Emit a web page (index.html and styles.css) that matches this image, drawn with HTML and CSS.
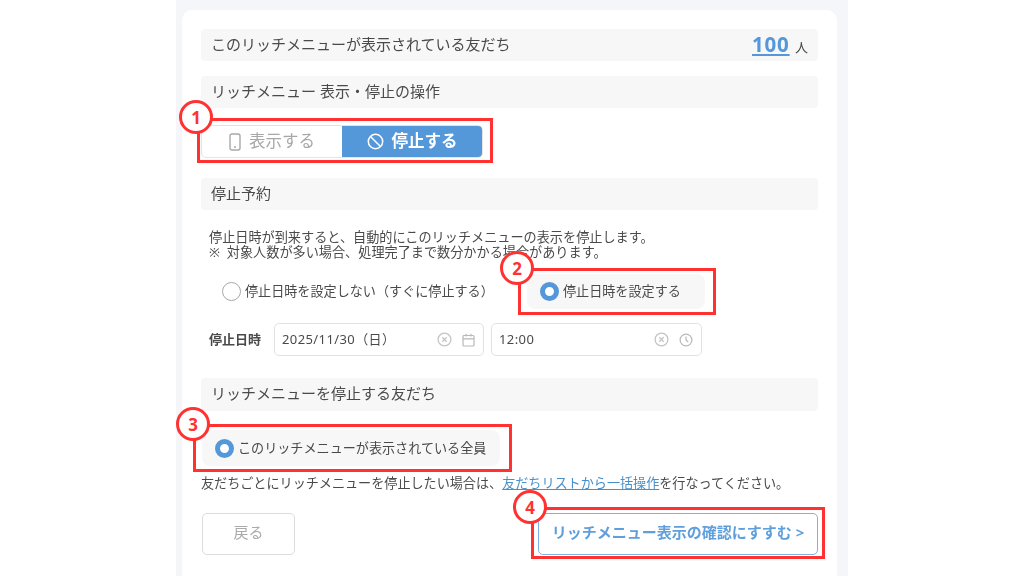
FILE: index.html
```html
<!DOCTYPE html>
<html lang="ja">
<head>
  <meta charset="UTF-8" />
  <title>リッチメニュー 表示・停止の操作</title>
  <link rel="stylesheet" href="styles.css">
</head>
<body>
  <div class="panel">
    <div class="card">
      <div class="bar bar-count">
        <span>このリッチメニューが表示されている友だち</span>
        <span class="count"><a href="#">100</a> 人</span>
      </div>
      <div class="bar bar-ops">リッチメニュー 表示・停止の操作</div>

      <div class="toggle">
        <div class="toggle-item">
          <svg width="12" height="18" viewBox="0 0 12 18" fill="none" stroke="#a8a8a8" stroke-width="1.4"><rect x="1" y="1" width="10" height="16" rx="2"/><path d="M5 14h2"/></svg>
          <span>表示する</span>
        </div>
        <div class="toggle-item toggle-on">
          <svg width="17" height="17" viewBox="0 0 17 17" fill="none" stroke="#fff" stroke-width="1.5"><circle cx="8.5" cy="8.5" r="7.2"/><path d="M3.5 3.5l10 10"/></svg>
          <span>停止する</span>
        </div>
      </div>

      <div class="bar bar-stop">停止予約</div>
      <p class="note">停止日時が到来すると、自動的にこのリッチメニューの表示を停止します。<br>※&nbsp; 対象人数が多い場合、処理完了まで数分かかる場合があります。</p>

      <div class="radio-row">
        <label class="radio radio-now"><i class="dot"></i><span>停止日時を設定しない（すぐに停止する）</span></label>
        <label class="radio radio-later pill"><i class="dot dot-on"></i><span>停止日時を設定する</span></label>
      </div>

      <div class="date-row">
        <b class="date-label">停止日時</b>
        <div class="field field-date">
          <span class="field-text">2025/11/30（日）</span>
          <svg width="15" height="15" viewBox="0 0 15 15" fill="none" stroke="#c4c4c4" stroke-width="1.3"><circle cx="7.5" cy="7.5" r="6.4"/><path d="M5.3 5.3l4.4 4.4M9.7 5.3l-4.4 4.4"/></svg>
          <svg class="field-end" width="13" height="14" viewBox="0 0 13 14" fill="none" stroke="#b8b8b8" stroke-width="1.2"><rect x="1" y="2.5" width="11" height="10.5" rx="1"/><path d="M1 5.8h11M4 .8v2.6M9 .8v2.6"/></svg>
        </div>
        <div class="field field-time">
          <span class="field-text">12:00</span>
          <svg width="15" height="15" viewBox="0 0 15 15" fill="none" stroke="#c4c4c4" stroke-width="1.3"><circle cx="7.5" cy="7.5" r="6.4"/><path d="M5.3 5.3l4.4 4.4M9.7 5.3l-4.4 4.4"/></svg>
          <svg class="field-end" width="14" height="14" viewBox="0 0 14 14" fill="none" stroke="#b8b8b8" stroke-width="1.2"><circle cx="7" cy="7" r="5.9"/><path d="M7 3.5V7l2.2 2"/></svg>
        </div>
      </div>

      <div class="bar bar-friends">リッチメニューを停止する友だち</div>
      <label class="radio radio-all pill"><i class="dot dot-on"></i><span>このリッチメニューが表示されている全員</span></label>
      <p class="bulk">友だちごとにリッチメニューを停止したい場合は、<a href="#">友だちリストから一括操作</a>を行なってください。</p>

      <div class="actions">
        <button class="btn-back">戻る</button>
        <button class="btn-next">リッチメニュー表示の確認にすすむ &gt;</button>
      </div>
    </div>
  </div>

  <!-- red callouts drawn over the form -->
  <div class="mark mark-1"></div>
  <div class="mark mark-2"></div>
  <div class="mark mark-3"></div>
  <div class="mark mark-4"></div>
  <div class="num num-1">1</div>
  <div class="num num-2">2</div>
  <div class="num num-3">3</div>
  <div class="num num-4">4</div>
</body>
</html>
```

FILE: styles.css
```css
html, body {
  margin: 0;
  padding: 0;
  height: 100%;
  overflow: hidden;
  background: #fff;
  color: #4a4a4a;
  font-family: "Noto Sans", "Noto Sans CJK JP", sans-serif;
}
body {
  position: relative;
  padding-left: 176px;
  box-sizing: border-box;
}
a {
  color: #4a90c8;
}
.panel {
  width: 672px;
  height: 576px;
  box-sizing: border-box;
  padding: 10px 11px 0 6px;
  background: #f5f6fa;
}
.card {
  height: 590px;
  box-sizing: border-box;
  padding: 19px 19px 0;
  background: #fff;
  border-radius: 10px;
  filter: blur(0.3px);
}
.bar {
  height: 32px;
  box-sizing: border-box;
  display: flex;
  align-items: center;
  justify-content: space-between;
  padding: 0 10px 4px;
  background: #f7f7f8;
  border-radius: 4px;
  font-size: 15px;
}
.bar-ops { margin-top: 15px; }
.bar-stop { margin-top: 20px; }
.bar-friends { margin-top: 22px; height: 33px; }
.count {
  font-size: 13px;
  padding-top: 2px;
}
.count a {
  margin-right: 2px;
  color: #5598da;
  font-size: 20.5px;
  font-weight: 700;
  letter-spacing: 0.8px;
}

.toggle {
  display: flex;
  width: 282px;
  height: 33px;
  margin-top: 17px;
  box-sizing: border-box;
  border: 1px solid #e4e4e4;
  border-radius: 5px;
  overflow: hidden;
}
.toggle-item {
  flex: 1;
  display: flex;
  align-items: center;
  justify-content: center;
  gap: 8px;
  color: #a8a8a8;
  font-size: 16.5px;
}
.toggle-item span {
  padding-bottom: 4px;
}
.toggle-on {
  background: #5598da;
  color: #fff;
  font-weight: 700;
}

.note {
  margin: 20px 0 0 8px;
  font-size: 13.15px;
  line-height: 15px;
}

.radio-row {
  display: flex;
  align-items: center;
  margin-top: 14px;
}
.radio {
  display: flex;
  align-items: center;
  gap: 4px;
  font-size: 13.1px;
}
.radio span {
  padding-bottom: 2px;
}
.radio-now {
  margin-left: 21px;
  width: 305px;
}
.radio-later {
  width: 178px;
  height: 35px;
  padding-left: 13px;
  box-sizing: border-box;
}
.pill {
  background: #f7f7f8;
  border-radius: 8px;
}
.dot {
  width: 19px;
  height: 19px;
  box-sizing: border-box;
  border: 1.5px solid #a8a8a8;
  border-radius: 50%;
  background: #fff;
}
.dot-on {
  border: 5.5px solid #5598da;
}

.date-row {
  display: flex;
  align-items: center;
  margin: 14px 0 0 8px;
}
.date-label {
  width: 65px;
  font-size: 13px;
  padding-bottom: 3px;
}
.field {
  display: flex;
  align-items: center;
  height: 33px;
  box-sizing: border-box;
  padding: 0 8px 0 7px;
  border: 1px solid #e2e2e2;
  border-radius: 5px;
  font-size: 13px;
}
.field-date { width: 210px; }
.field-time { width: 211px; margin-left: 7px; }
.field-text {
  flex: 1;
  padding-bottom: 2px;
  letter-spacing: 0.4px;
}
.field-end { margin-left: 10px; }

.radio-all {
  width: 298px;
  height: 36px;
  margin: 19px 0 0 1px;
  padding-left: 13px;
  box-sizing: border-box;
}
.bulk {
  margin: 9px 0 0;
  font-size: 13.1px;
  line-height: 16px;
}

.actions {
  display: flex;
  justify-content: space-between;
  margin-top: 22px;
  padding-left: 1px;
}
.actions button {
  height: 42px;
  padding: 0 0 5px;
  background: #fff;
  border-radius: 5px;
  font-family: inherit;
  font-weight: 700;
}
.actions .btn-back {
  width: 93px;
  border: 1.5px solid #dcdcdc;
  color: #aaa;
  font-size: 15px;
  font-weight: 400;
}
.btn-next {
  width: 280px;
  border: 1.5px solid #7eb2e4;
  color: #5f9fdc;
  font-size: 15px;
}

/* callouts */
.mark {
  position: absolute;
  box-sizing: border-box;
  border: 3px solid #ff3131;
}
.mark-1 { left: 197px; top: 118px; width: 296px; height: 45px; }
.mark-2 { left: 518px; top: 268px; width: 198px; height: 47px; }
.mark-3 { left: 193px; top: 424px; width: 319px; height: 48px; }
.mark-4 { left: 531px; top: 507px; width: 294px; height: 52px; }
.num {
  position: absolute;
  width: 34px;
  height: 34px;
  box-sizing: border-box;
  display: flex;
  align-items: center;
  justify-content: center;
  border: 3px solid #ff3131;
  border-radius: 50%;
  background: #fff;
  color: #ff3131;
  font-size: 17px;
  font-weight: 700;
}
.num-1 { left: 179px; top: 100px; }
.num-2 { left: 500px; top: 251px; }
.num-3 { left: 176px; top: 407px; }
.num-4 { left: 513px; top: 490px; }
```
